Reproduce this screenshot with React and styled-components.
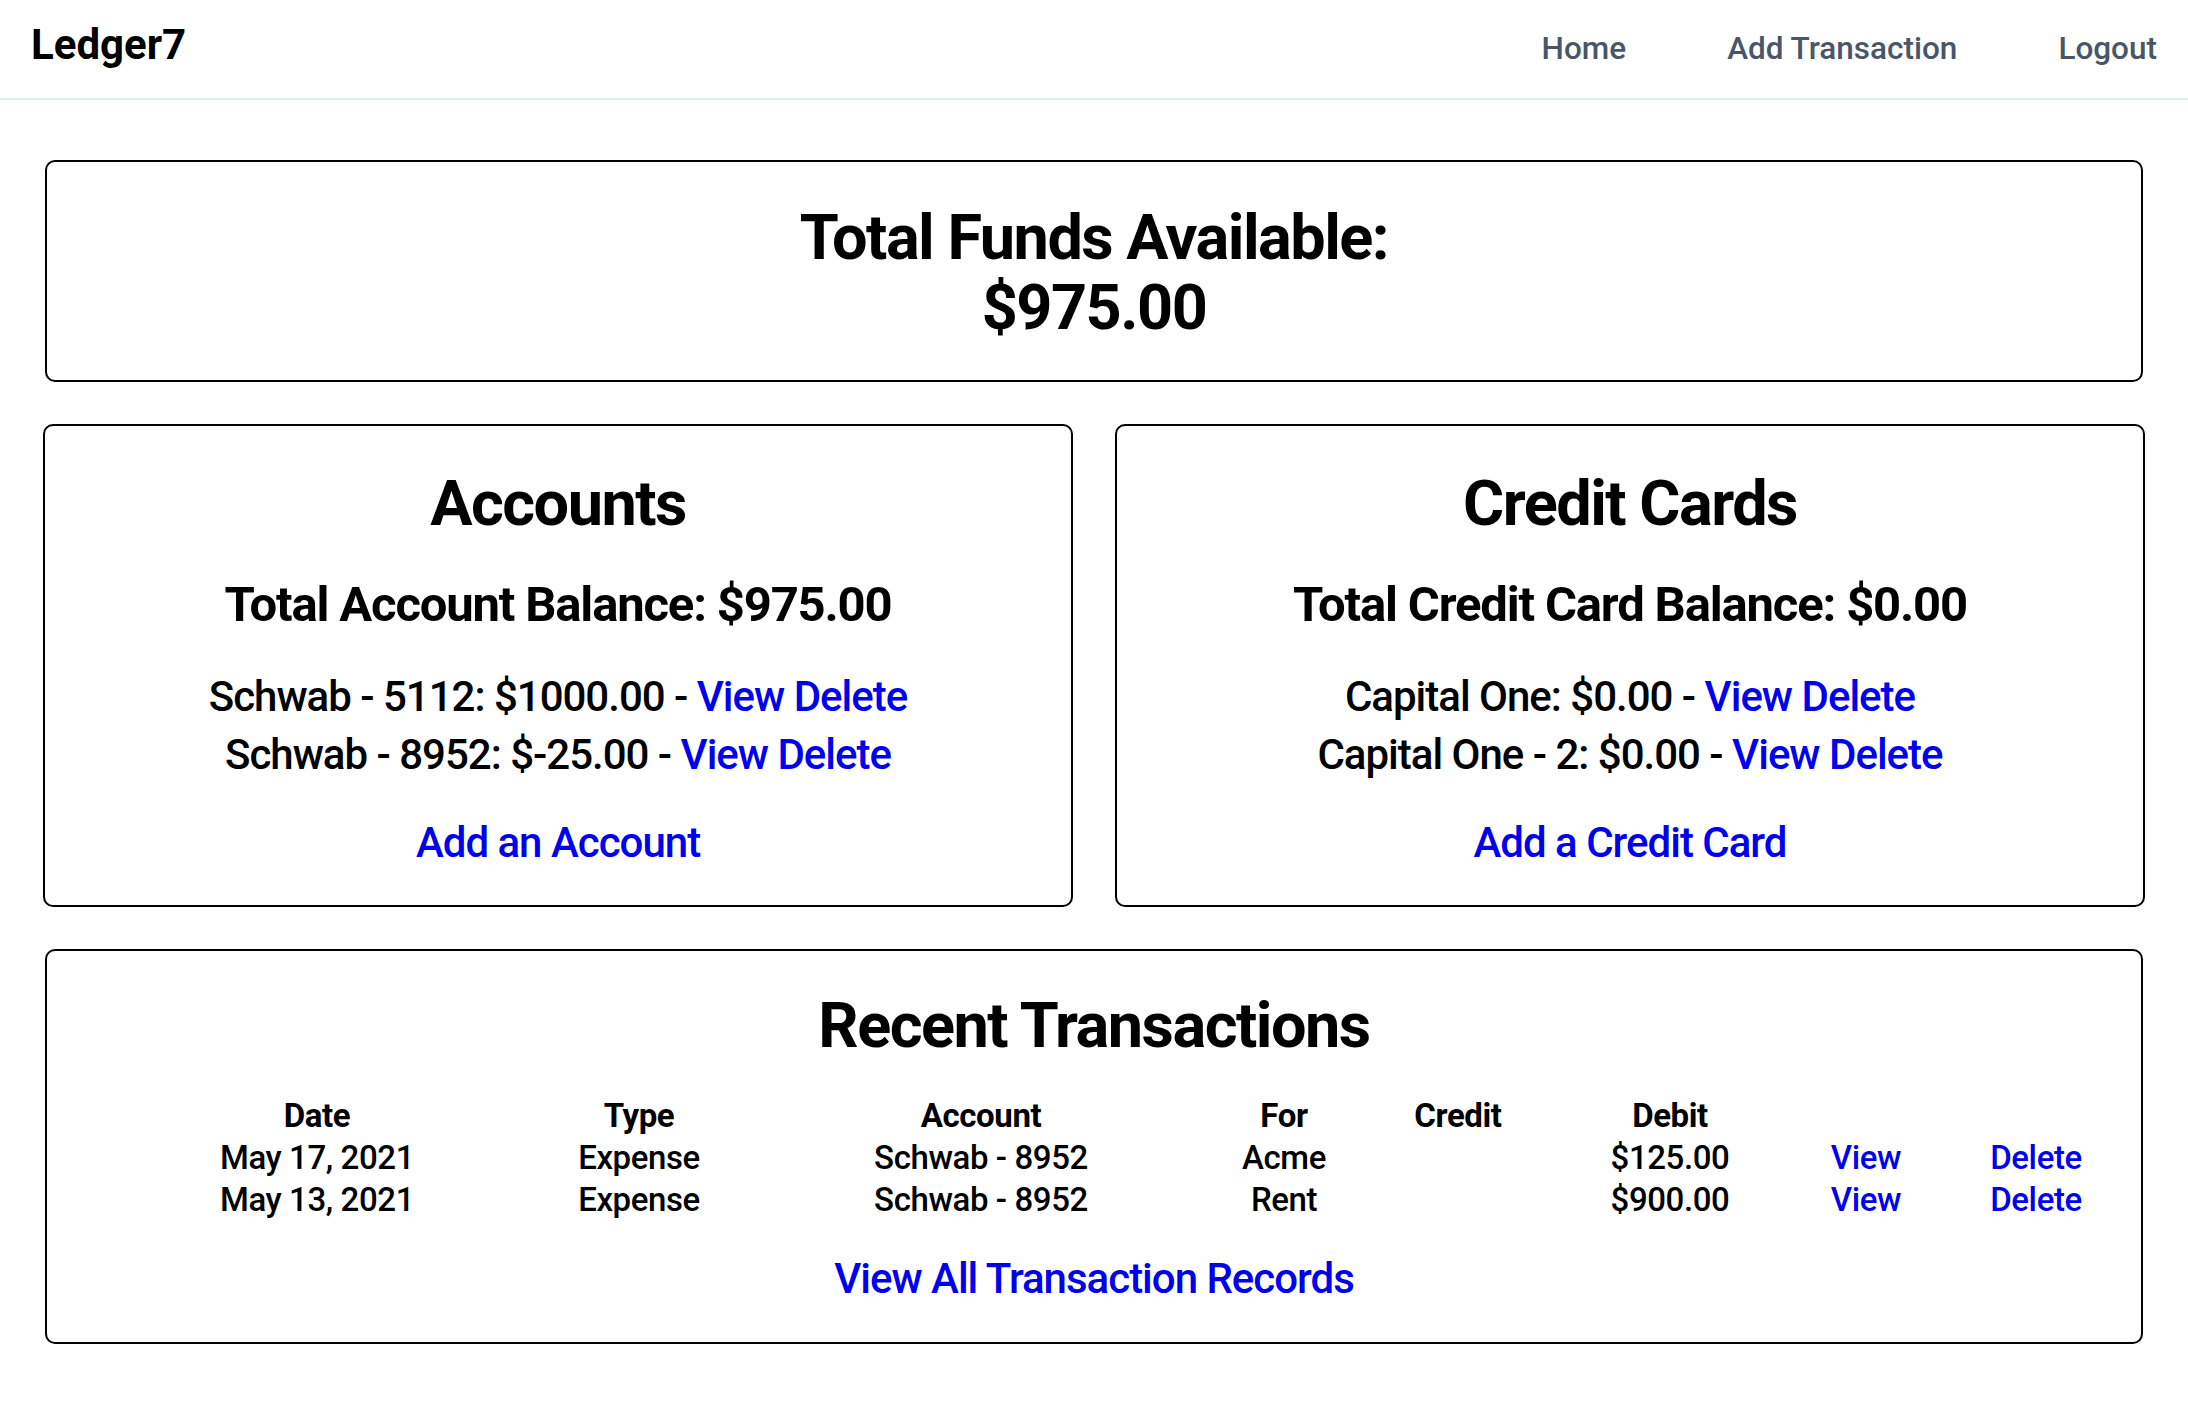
import React from 'react'
import styled, { createGlobalStyle } from 'styled-components'

const GlobalStyle=createGlobalStyle`
body{
    margin:0;
    background:#fff;
    color:#000;
    font-family: Roboto, "Liberation Sans", sans-serif;
}
a{
    color:#0000ee;
    text-decoration:none;
}
`;

const accounts=[
    {name:'Schwab - 5112', balance:'$1000.00'},
    {name:'Schwab - 8952', balance:'$-25.00'},
];

const cards=[
    {name:'Capital One', balance:'$0.00'},
    {name:'Capital One - 2', balance:'$0.00'},
];

const transactions=[
    {date:'May 17, 2021', type:'Expense', account:'Schwab - 8952', payee:'Acme', credit:'', debit:'$125.00'},
    {date:'May 13, 2021', type:'Expense', account:'Schwab - 8952', payee:'Rent', credit:'', debit:'$900.00'},
];

function Summary({title, totalLabel, total, items, addLabel}) {
    return (
        <Card>
            <Title>{title}</Title>
            <Balance>{totalLabel}: {total}</Balance>
            <List>
                {items.map(i=>(
                    <Line key={i.name}>
                        {i.name}: {i.balance} - <a href="#">View</a> <a href="#">Delete</a>
                    </Line>
                ))}
            </List>
            <AddLink href="#">{addLabel}</AddLink>
        </Card>
    )
}

function App() {
    return (
        <>
            <GlobalStyle/>
            <Nav>
                <Logo>Ledger7</Logo>
                <Links>
                    <NavLink href="#">Home</NavLink>
                    <NavLink href="#">Add Transaction</NavLink>
                    <NavLink href="#">Logout</NavLink>
                </Links>
            </Nav>
            <Main>
                <Funds>
                    <Title>Total Funds Available:</Title>
                    <Title>$975.00</Title>
                </Funds>
                <Columns>
                    <Summary
                        title="Accounts"
                        totalLabel="Total Account Balance"
                        total="$975.00"
                        items={accounts}
                        addLabel="Add an Account"
                    />
                    <Summary
                        title="Credit Cards"
                        totalLabel="Total Credit Card Balance"
                        total="$0.00"
                        items={cards}
                        addLabel="Add a Credit Card"
                    />
                </Columns>
                <Recent>
                    <Title>Recent Transactions</Title>
                    <Table>
                        <Head>Date</Head>
                        <Head>Type</Head>
                        <Head>Account</Head>
                        <Head>For</Head>
                        <Head>Credit</Head>
                        <Head>Debit</Head>
                        <Head/>
                        <Head/>
                        {transactions.map(t=>(
                            <React.Fragment key={t.date}>
                                <Cell>{t.date}</Cell>
                                <Cell>{t.type}</Cell>
                                <Cell>{t.account}</Cell>
                                <Cell>{t.payee}</Cell>
                                <Cell>{t.credit}</Cell>
                                <Cell>{t.debit}</Cell>
                                <Cell><a href="#">View</a></Cell>
                                <Cell><a href="#">Delete</a></Cell>
                            </React.Fragment>
                        ))}
                    </Table>
                    <AddLink href="#" $gap="29px">View All Transaction Records</AddLink>
                </Recent>
            </Main>
        </>
    )
}

const Nav=styled.header`
display:flex;
align-items:baseline;
justify-content:space-between;
height:98px;
padding:0 31px;
border-bottom:2px solid #e2e8f0;
box-sizing:content-box;
`;

const Logo=styled.div`
font-size:42px;
font-weight:700;
line-height:90px;
`;

const Links=styled.nav`
display:flex;
gap:101px;
`;

const NavLink=styled.a`
&&{
    color:#4a5568;
}
font-size:31.5px;
font-weight:500;
line-height:98px;
`;

const Main=styled.main`
display:flex;
flex-direction:column;
gap:42px;
padding:60px 43px;
`;

const Box=styled.section`
border:2px solid #000;
border-radius:10px;
text-align:center;
`;

const Funds=styled(Box)`
margin:0 2px;
padding:41px 0 37px;
`;

const Recent=styled(Box)`
margin:0 2px;
padding:40px 0 34px;
`;

const Card=styled(Box)`
padding:43px 0 33px;
`;

const Columns=styled.div`
display:grid;
grid-template-columns:1fr 1fr;
gap:42px;
`;

const Title=styled.h2`
margin:0;
font-size:63px;
font-weight:700;
line-height:70px;
letter-spacing:-0.024em;
`;

const Balance=styled.h3`
margin:36px 0 0;
font-size:49px;
font-weight:700;
line-height:60px;
letter-spacing:-0.024em;
`;

const List=styled.div`
margin-top:33px;
`;

const Line=styled.div`
font-size:42px;
font-weight:500;
line-height:58px;
letter-spacing:-0.024em;
`;

const AddLink=styled.a`
display:block;
margin-top:${p=>p.$gap || '30px'};
font-size:42px;
font-weight:500;
line-height:58px;
letter-spacing:-0.024em;
`;

const Table=styled.div`
display:grid;
grid-template-columns:430px 214px 470px 136px 212px 212px 180px 160px;
grid-auto-rows:42px;
margin:34px 0 0 55px;
font-size:33px;
line-height:42px;
letter-spacing:-0.4px;
`;

const Head=styled.div`
font-weight:700;
`;

const Cell=styled.div`
font-weight:500;
`;

export default App
